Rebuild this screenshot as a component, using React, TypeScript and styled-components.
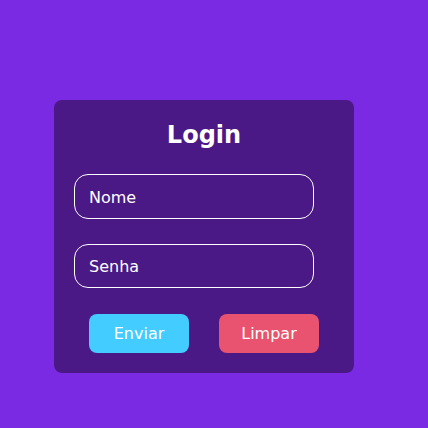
import React from "react";
import styled, { createGlobalStyle } from "styled-components";

const Global = createGlobalStyle`
  html, body { margin: 0; padding: 0; background: #7b2ae3; }
  body { font-family: "DejaVu Sans", Verdana, sans-serif; width: 428px; height: 428px; }
  * { box-sizing: border-box; }
`;

const Page = styled.div`
  padding: 100px 0 0 54px;
`;

const Card = styled.form`
  width: 300px;
  height: 273px;
  background: #4a1986;
  border-radius: 8px;
  padding: 18px 20px 20px;
  display: flex;
  flex-direction: column;
`;

const Title = styled.h2`
  margin: 0 0 22px;
  text-align: center;
  color: #fff;
  font-size: 24px;
  font-weight: bold;
  line-height: 34px;
`;

const Input = styled.input`
  width: 240px;
  height: 45px;
  border: 1px solid #fff;
  border-radius: 14px;
  background: transparent;
  color: #fff;
  font-family: "DejaVu Sans", Verdana, sans-serif;
  font-size: 16px;
  padding: 2px 14px 0;
  margin-bottom: 25px;
  outline: none;
  &::placeholder { color: #fff; opacity: 1; }
`;

const Buttons = styled.div`
  display: flex;
  justify-content: center;
  gap: 30px;
  margin-top: 1px;
`;

const Button = styled.button<{ $bg: string }>`
  width: 100px;
  height: 39px;
  border: none;
  border-radius: 8px;
  background: ${(p) => p.$bg};
  color: #fff;
  font-family: "DejaVu Sans", Verdana, sans-serif;
  font-size: 16px;
  cursor: pointer;
`;

export default function App() {
  return (
    <>
      <Global />
      <Page>
        <Card onSubmit={(e) => e.preventDefault()}>
          <Title>Login</Title>
          <Input placeholder="Nome" />
          <Input placeholder="Senha" type="password" />
          <Buttons>
            <Button $bg="#42ccff" type="submit">Enviar</Button>
            <Button $bg="#e9536f" type="reset">Limpar</Button>
          </Buttons>
        </Card>
      </Page>
    </>
  );
}
